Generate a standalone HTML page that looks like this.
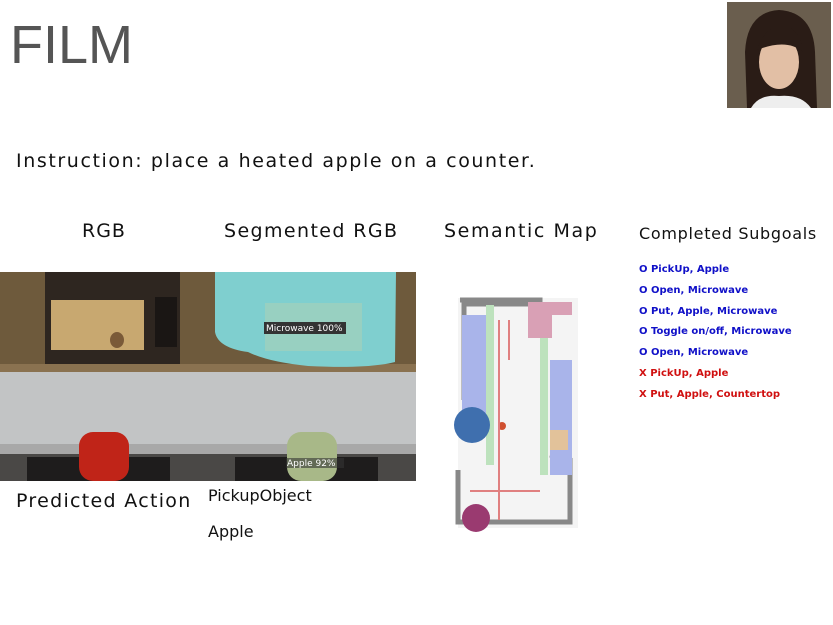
<!DOCTYPE html>
<html><head><style>
body{margin:0;width:833px;height:625px;background:#fff;position:relative;overflow:hidden;font-family:"DejaVu Sans","Liberation Sans",sans-serif}
.a{position:absolute}
.t{font-size:19px;color:#111;white-space:nowrap}
.s{font-size:10px;font-weight:bold;white-space:nowrap}
</style></head><body>
<div class="a" style="left:10px;top:14px;font-family:'Liberation Sans',sans-serif;font-size:54px;color:#555">FILM</div>
<svg class="a" style="left:727px;top:2px" width="104" height="106" viewBox="0 0 104 106">
<rect width="104" height="106" fill="#6a5e4e"/>
<path d="M20 106 L18 50 Q20 10 52 8 Q86 10 88 50 L90 106Z" fill="#2a1c16"/>
<ellipse cx="52" cy="60" rx="20" ry="27" fill="#e2bfa5"/>
<path d="M30 48 Q38 22 60 24 Q74 30 76 50 Q60 36 30 48Z" fill="#2a1c16"/>
<path d="M24 106 Q32 92 52 94 Q74 92 84 106Z" fill="#eee"/>
</svg>
<div class="a t" style="left:16px;top:150px;letter-spacing:1.6px">Instruction: place a heated apple on a counter.</div>
<div class="a t" style="left:82px;top:220px;letter-spacing:1px">RGB</div>
<div class="a t" style="left:224px;top:220px;letter-spacing:1.4px">Segmented RGB</div>
<div class="a t" style="left:444px;top:220px;letter-spacing:1.6px">Semantic Map</div>
<div class="a" style="left:639px;top:224px;font-size:16px;color:#111;letter-spacing:.7px">Completed Subgoals</div>
<svg class="a" style="left:0;top:272px" width="417" height="209">
<defs><g id="k">
<rect width="208" height="209" fill="#c4c6c7"/>
<rect width="208" height="100" fill="#6e5a3c"/>
<rect x="0" y="92" width="208" height="8" fill="#8a7250"/>
<rect x="0" y="100" width="208" height="72" fill="#c2c4c5"/>
<rect x="0" y="172" width="208" height="10" fill="#a8a8a8"/>
<rect x="0" y="182" width="208" height="27" fill="#4a4846"/>
<rect x="27" y="185" width="143" height="24" fill="#1e1c1c"/>
</g></defs>
<use href="#k"/>
<rect x="45" y="0" width="135" height="92" fill="#2e2620"/>
<rect x="51" y="28" width="93" height="50" fill="#c8a870"/>
<rect x="155" y="25" width="22" height="50" fill="#1a1614"/>
<ellipse cx="117" cy="68" rx="7" ry="8" fill="#7a5a38"/>
<rect x="79" y="160" width="50" height="49" rx="14" fill="#c02418"/>
<g transform="translate(208,0)"><use href="#k"/>
<path d="M7 0 H188 L187 90 Q160 97 100 94 Q60 90 40 80 Q10 76 7 60Z" fill="#7fcfcf"/>
<rect x="57" y="31" width="97" height="48" fill="#a8d0b8" opacity=".6"/>
<rect x="56" y="50" width="82" height="12" fill="#333"/>
<text x="58" y="59" font-size="9" fill="#fff" font-family="DejaVu Sans">Microwave 100%</text>
<rect x="79" y="160" width="50" height="49" rx="14" fill="#a8b888"/>
<rect x="78" y="186" width="58" height="10" fill="#333" opacity=".6"/>
<text x="79" y="194" font-size="9" fill="#fff" font-family="DejaVu Sans">Apple 92%</text>
</g></svg>
<div class="a t" style="left:16px;top:490px;letter-spacing:1.3px">Predicted Action</div>
<div class="a" style="left:208px;top:486px;font-size:16px;color:#111">PickupObject</div>
<div class="a" style="left:208px;top:522px;font-size:16px;color:#111">Apple</div>
<svg class="a" style="left:440px;top:290px" width="150" height="245">
<rect x="18" y="8" width="120" height="230" fill="#f4f4f4"/>
<path d="M20 10 H100 V14 H24 V110" stroke="#888" stroke-width="5" fill="none"/>
<path d="M18 180 V232 H130 V170 L110 165" stroke="#888" stroke-width="5" fill="none"/>
<rect x="22" y="25" width="24" height="120" fill="#a9b4ea"/>
<rect x="110" y="70" width="22" height="115" fill="#a9b4ea"/>
<rect x="46" y="15" width="8" height="160" fill="#bde2bd"/>
<rect x="100" y="35" width="8" height="150" fill="#bde2bd"/>
<path d="M88 12 H132 V25 H112 V48 H88Z" fill="#d9a0b5"/>
<circle cx="32" cy="135" r="18" fill="#3f6fae"/>
<circle cx="36" cy="228" r="14" fill="#9a3a70"/>
<rect x="110" y="140" width="18" height="20" fill="#e2c29a"/>
<circle cx="62" cy="136" r="4" fill="#d05030"/>
<g fill="#e08080"><rect x="58" y="30" width="2" height="200"/><rect x="68" y="30" width="2" height="40"/><rect x="30" y="200" width="70" height="2"/></g>
</svg>
<div class="a s" style="left:639px;top:264px;color:#1010c8">O PickUp, Apple</div>
<div class="a s" style="left:639px;top:285px;color:#1010c8">O Open, Microwave</div>
<div class="a s" style="left:639px;top:306px;color:#1010c8">O Put, Apple, Microwave</div>
<div class="a s" style="left:639px;top:326px;color:#1010c8">O Toggle on/off, Microwave</div>
<div class="a s" style="left:639px;top:347px;color:#1010c8">O Open, Microwave</div>
<div class="a s" style="left:639px;top:368px;color:#d01010">X PickUp, Apple</div>
<div class="a s" style="left:639px;top:389px;color:#d01010">X Put, Apple, Countertop</div>
</body></html>
